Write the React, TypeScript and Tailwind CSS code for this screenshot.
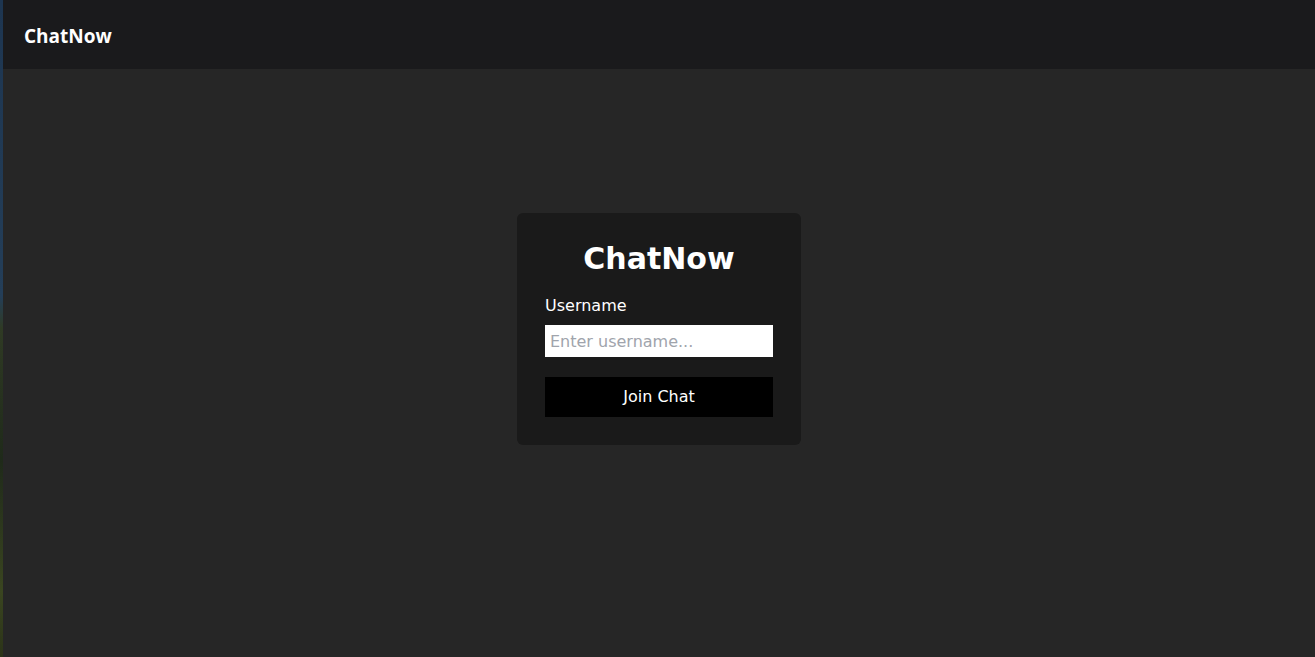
import React from "react";

export default function App() {
  const [username, setUsername] = React.useState("");

  return (
    <div className="flex h-[657px] w-full bg-[#262626] font-['DejaVu_Sans',sans-serif]">
      {/* background peeking through on the left */}
      <div className="w-[3px] shrink-0 bg-[linear-gradient(to_bottom,#1d3550_0%,#243e58_45%,#2f3a24_50%,#1f2a1a_70%,#3a4520_90%,#2b3318_100%)]"></div>

      <div className="flex flex-1 flex-col">
        {/* Header */}
        <header className="flex h-[69px] shrink-0 items-center bg-[#1a1a1c] pt-[3px] pl-[21px]">
          <span className="font-['Open_Sans',sans-serif] text-[19px] font-bold text-white">
            ChatNow
          </span>
        </header>

        {/* Login */}
        <main className="flex flex-1 items-start justify-center pt-[144px]">
          <div className="w-[284px] rounded-md bg-[#1a1a1a] p-7">
            <h1 className="mb-[17px] text-center text-[30px] leading-9 font-bold text-white">
              ChatNow
            </h1>
            <label className="mb-[7px] block text-base leading-6 text-white">
              Username
            </label>
            <input
              type="text"
              value={username}
              onChange={(e) => setUsername(e.target.value)}
              placeholder="Enter username..."
              className="block h-8 w-full bg-white px-[5px] text-base text-gray-900 outline-none placeholder:text-[#a0a4ac]"
            />
            <button className="mt-5 h-10 w-full bg-black text-base text-white">
              Join Chat
            </button>
          </div>
        </main>
      </div>
    </div>
  );
}
